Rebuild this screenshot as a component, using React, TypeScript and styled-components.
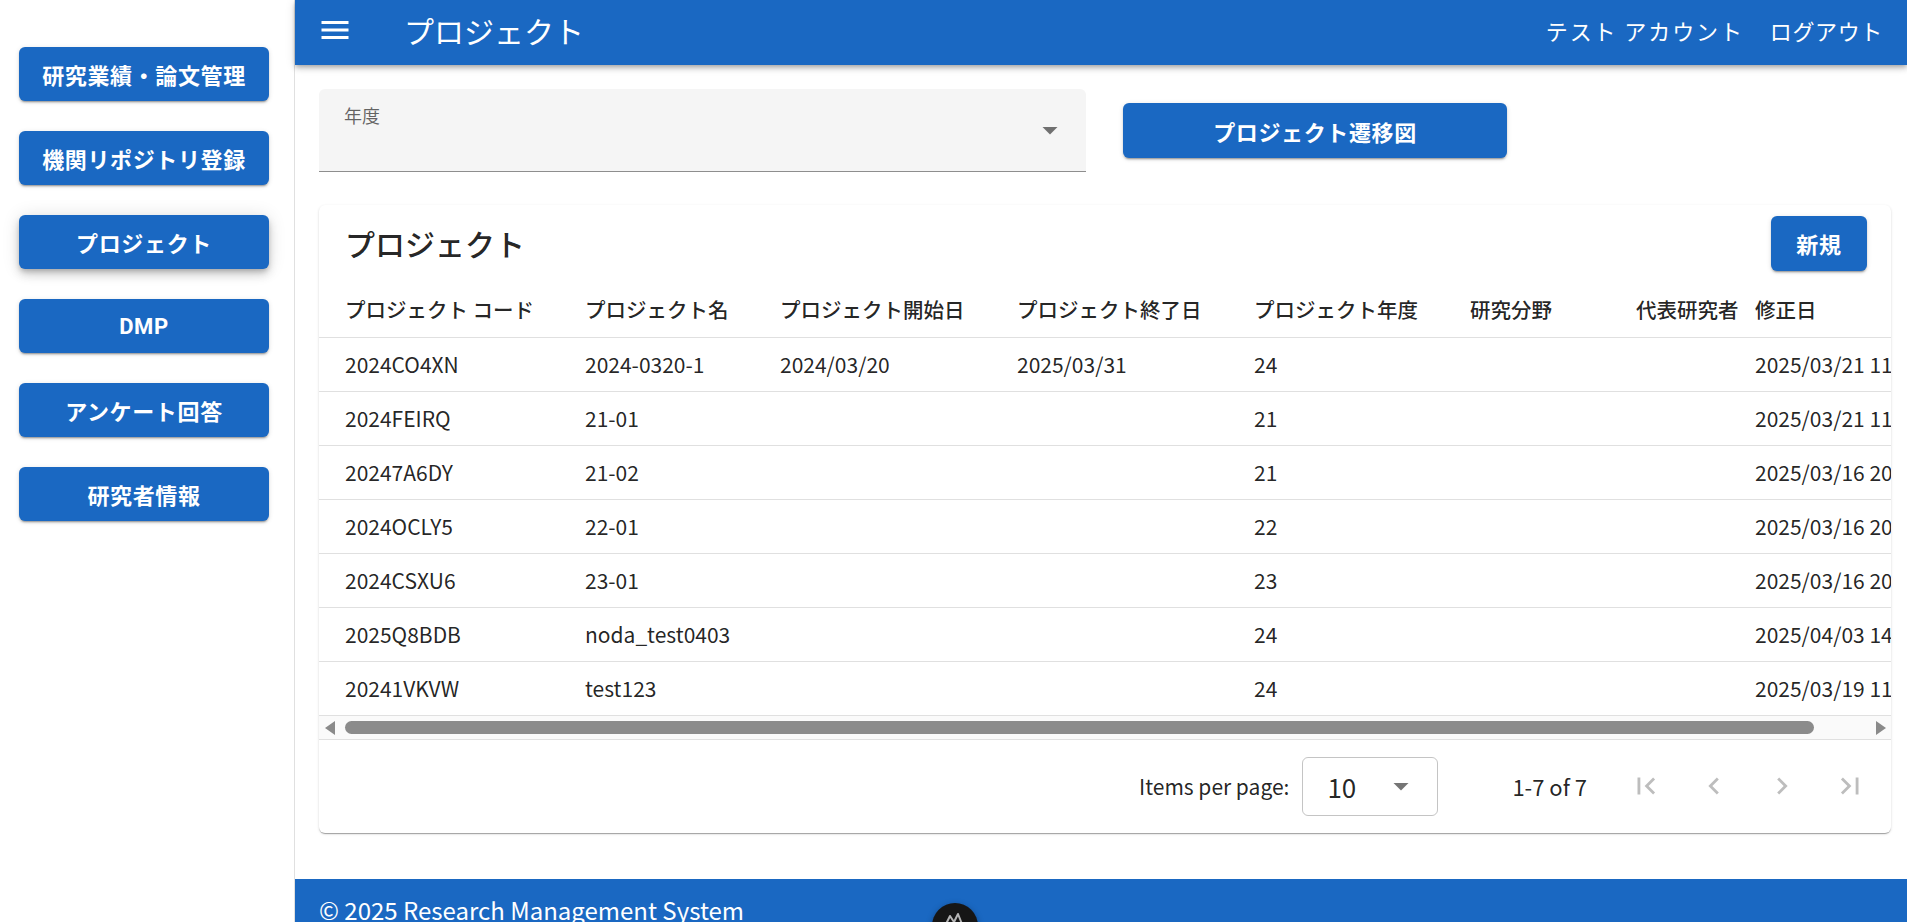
import React from "react";
import styled, { createGlobalStyle } from "styled-components";

const BLUE = "#1a68c2";
const JP = `"Noto Sans CJK JP", "Noto Sans", sans-serif`;
const UI = `Roboto, "Noto Sans CJK JP", sans-serif`;

const GlobalStyle = createGlobalStyle`
  html { scrollbar-width: none; }
  html::-webkit-scrollbar { display: none; }
  body {
    margin: 0;
    background: #fff;
    font-family: ${JP};
    color: rgba(0, 0, 0, 0.87);
  }
  * { box-sizing: border-box; }
`;

const Layout = styled.div`
  display: flex;
  min-height: 100vh;
`;

const Sidebar = styled.nav`
  width: 295px;
  flex-shrink: 0;
  border-right: 1px solid #e0e0e0;
  padding: 47px 25px 0 19px;
  display: flex;
  flex-direction: column;
  gap: 30px;
`;

const NavButton = styled.button<{ $active?: boolean }>`
  height: 54px;
  width: 100%;
  border: none;
  border-radius: 6px;
  background: ${BLUE};
  color: #fff;
  font-family: ${UI};
  font-size: 22px;
  font-weight: 700;
  letter-spacing: 0.63px;
  cursor: pointer;
  box-shadow: ${(p) =>
    p.$active
      ? "0px 3px 5px -1px rgba(0,0,0,0.2), 0px 6px 10px 0px rgba(0,0,0,0.14), 0px 1px 18px 0px rgba(0,0,0,0.12)"
      : "0px 3px 1px -2px rgba(0,0,0,0.2), 0px 2px 2px 0px rgba(0,0,0,0.14), 0px 1px 5px 0px rgba(0,0,0,0.12)"};
`;

const Main = styled.div`
  flex: 1;
  min-width: 0;
  display: flex;
  flex-direction: column;
`;

const AppBar = styled.header`
  height: 65px;
  background: ${BLUE};
  color: #fff;
  display: flex;
  align-items: center;
  padding: 0 24px 6px 22px;
  position: relative;
  z-index: 1;
  box-shadow: 0px 2px 4px -1px rgba(0, 0, 0, 0.2), 0px 4px 5px 0px rgba(0, 0, 0, 0.14),
    0px 1px 10px 0px rgba(0, 0, 0, 0.12);
`;

const MenuButton = styled.button`
  background: none;
  border: none;
  padding: 0;
  color: #fff;
  display: flex;
  cursor: pointer;
`;

const AppTitle = styled.h1`
  margin: 0 0 0 51px;
  font-family: ${JP};
  font-size: 30px;
  font-weight: 400;
  flex: 1;
`;

const AppActions = styled.div`
  display: flex;
  gap: 26px;
`;

const AppAction = styled.button<{ $spacing?: number }>`
  background: none;
  border: none;
  padding: 0;
  color: #fff;
  font-family: ${JP};
  font-size: 22px;
  font-weight: 400;
  letter-spacing: ${(p) => p.$spacing ?? 0.63}px;
  cursor: pointer;
`;

const Content = styled.main`
  padding: 24px 16px 46px 24px;
  display: flex;
  flex-direction: column;
  gap: 33px;
`;

const FilterRow = styled.div`
  display: flex;
  align-items: center;
  gap: 37px;
`;

const SelectField = styled.div`
  width: 767px;
  height: 83px;
  background: #f5f5f5;
  border-bottom: 1px solid rgba(0, 0, 0, 0.42);
  border-radius: 6px 6px 0 0;
  display: flex;
  align-items: center;
  justify-content: space-between;
  padding: 0 18px 0 25px;
`;

const FieldLabel = styled.span`
  align-self: flex-start;
  margin-top: 13px;
  font-size: 18px;
  color: rgba(0, 0, 0, 0.6);
`;

const DropIcon = styled.span`
  display: flex;
  color: rgba(0, 0, 0, 0.54);
`;

const PrimaryButton = styled.button<{ $width: number }>`
  width: ${(p) => p.$width}px;
  height: 55px;
  border: none;
  border-radius: 6px;
  background: ${BLUE};
  color: #fff;
  font-family: ${UI};
  font-size: 22px;
  font-weight: 700;
  letter-spacing: 0.63px;
  cursor: pointer;
  flex-shrink: 0;
  box-shadow: 0px 3px 1px -2px rgba(0, 0, 0, 0.2), 0px 2px 2px 0px rgba(0, 0, 0, 0.14),
    0px 1px 5px 0px rgba(0, 0, 0, 0.12);
`;

const Card = styled.section`
  background: #fff;
  border-radius: 6px;
  overflow: hidden;
  box-shadow: 0px 2px 1px -1px rgba(0, 0, 0, 0.2), 0px 1px 1px 0px rgba(0, 0, 0, 0.14),
    0px 1px 3px 0px rgba(0, 0, 0, 0.12);
`;

const CardHeader = styled.div`
  height: 76px;
  display: flex;
  align-items: center;
  justify-content: space-between;
  padding: 0 24px 0 26px;
`;

const CardTitle = styled.h2`
  margin: 0;
  font-size: 30px;
  font-weight: 500;
  color: rgba(0, 0, 0, 0.87);
`;

const TableViewport = styled.div`
  overflow: hidden;
`;

const Table = styled.table`
  border-collapse: collapse;
  table-layout: fixed;
  width: 1653px;
`;

const HeadCell = styled.th`
  height: 56px;
  padding: 0 0 0 26px;
  text-align: left;
  font-size: 20.5px;
  font-weight: 500;
  white-space: nowrap;
  color: rgba(0, 0, 0, 0.87);
  border-bottom: 1px solid #e0e0e0;
`;

const Cell = styled.td`
  height: 54px;
  padding: 0 0 0 26px;
  font-size: 21px;
  font-weight: 400;
  white-space: nowrap;
  overflow: hidden;
  color: rgba(0, 0, 0, 0.87);
  border-bottom: 1px solid #e0e0e0;
`;

const ScrollBar = styled.div`
  height: 23px;
  background: #fafafa;
  display: flex;
  align-items: center;
  gap: 10px;
  padding: 1px 5px 0 6px;
`;

const ScrollArrow = styled.span<{ $dir: "left" | "right" }>`
  width: 0;
  height: 0;
  border-top: 7px solid transparent;
  border-bottom: 7px solid transparent;
  ${(p) =>
    p.$dir === "left"
      ? "border-right: 10px solid #8a8a8a;"
      : "border-left: 10px solid #8a8a8a;"}
`;

const ScrollTrack = styled.div`
  flex: 1;
  height: 13px;
  display: flex;
  padding-right: 52px;
`;

const ScrollThumb = styled.div`
  flex: 1;
  background: #8b8b8b;
  border-radius: 7px;
`;

const Paginator = styled.div`
  height: 94px;
  border-top: 1px solid #e0e0e0;
  display: flex;
  align-items: center;
  justify-content: flex-end;
  padding-right: 7px;
  font-size: 21px;
  color: rgba(0, 0, 0, 0.87);
`;

const PageLabel = styled.span`
  margin-right: 13px;
`;

const PageSelect = styled.div`
  width: 136px;
  height: 59px;
  border: 1px solid rgba(0, 0, 0, 0.23);
  border-radius: 6px;
  display: flex;
  align-items: center;
  justify-content: space-between;
  padding: 0 18px 0 24px;
  font-size: 26px;
`;

const RangeLabel = styled.span`
  margin-left: 74px;
  margin-right: 25px;
  font-size: 22px;
`;

const IconBtn = styled.button`
  width: 68px;
  height: 68px;
  background: none;
  border: none;
  padding: 0;
  display: flex;
  align-items: center;
  justify-content: center;
  color: rgba(0, 0, 0, 0.26);
`;

const Footer = styled.footer`
  background: ${BLUE};
  color: #fff;
  padding: 13px 24px 30px;
  font-size: 24px;
  font-family: ${JP};
`;

const FloatingBadge = styled.div`
  position: fixed;
  left: 932px;
  top: 903px;
  width: 46px;
  height: 46px;
  border-radius: 50%;
  background: #161616;
  display: flex;
  justify-content: center;
  padding-top: 9px;
  box-shadow: 0 2px 6px rgba(0, 0, 0, 0.35);
`;

const Icon = ({ d, size = 24 }: { d: string; size?: number }) => (
  <svg width={size} height={size} viewBox="0 0 24 24" fill="currentColor">
    <path d={d} />
  </svg>
);

const MENU = "M3 18h18v-2H3zm0-5h18v-2H3zm0-7v2h18V6z";
const DROP = "M7 10l5 5 5-5z";
const FIRST = "M18.41 16.59L13.82 12l4.59-4.59L17 6l-6 6 6 6zM6 6h2v12H6z";
const PREV = "M15.41 16.59L10.83 12l4.58-4.59L14 6l-6 6 6 6 1.41-1.41z";
const NEXT = "M8.59 16.59L13.17 12 8.59 7.41 10 6l6 6-6 6-1.41-1.41z";
const LAST = "M5.59 7.41L10.18 12l-4.59 4.59L7 18l6-6-6-6zM16 6h2v12h-2z";

const navItems = ["研究業績・論文管理", "機関リポジトリ登録", "プロジェクト", "DMP", "アンケート回答", "研究者情報"];

const columns = [
  { label: "プロジェクト コード", width: 240 },
  { label: "プロジェクト名", width: 195 },
  { label: "プロジェクト開始日", width: 237 },
  { label: "プロジェクト終了日", width: 237 },
  { label: "プロジェクト年度", width: 216 },
  { label: "研究分野", width: 166 },
  { label: "代表研究者", width: 119 },
  { label: "修正日", width: 243 },
];

const rows = [
  ["2024CO4XN", "2024-0320-1", "2024/03/20", "2025/03/31", "24", "", "", "2025/03/21 11:42:10"],
  ["2024FEIRQ", "21-01", "", "", "21", "", "", "2025/03/21 11:40:55"],
  ["20247A6DY", "21-02", "", "", "21", "", "", "2025/03/16 20:15:31"],
  ["2024OCLY5", "22-01", "", "", "22", "", "", "2025/03/16 20:14:02"],
  ["2024CSXU6", "23-01", "", "", "23", "", "", "2025/03/16 20:12:47"],
  ["2025Q8BDB", "noda_test0403", "", "", "24", "", "", "2025/04/03 14:05:19"],
  ["20241VKVW", "test123", "", "", "24", "", "", "2025/03/19 11:30:08"],
];

export default function App() {
  return (
    <>
      <GlobalStyle />
      <Layout>
        <Sidebar>
          {navItems.map((item) => (
            <NavButton key={item} $active={item === "プロジェクト"}>
              {item}
            </NavButton>
          ))}
        </Sidebar>
        <Main>
          <AppBar>
            <MenuButton aria-label="menu">
              <Icon d={MENU} size={36} />
            </MenuButton>
            <AppTitle>プロジェクト</AppTitle>
            <AppActions>
              <AppAction $spacing={1.9}>テスト アカウント</AppAction>
              <AppAction>ログアウト</AppAction>
            </AppActions>
          </AppBar>
          <Content>
            <FilterRow>
              <SelectField>
                <FieldLabel>年度</FieldLabel>
                <DropIcon>
                  <Icon d={DROP} size={36} />
                </DropIcon>
              </SelectField>
              <PrimaryButton $width={384}>プロジェクト遷移図</PrimaryButton>
            </FilterRow>
            <Card>
              <CardHeader>
                <CardTitle>プロジェクト</CardTitle>
                <PrimaryButton $width={96}>新規</PrimaryButton>
              </CardHeader>
              <TableViewport>
                <Table>
                  <colgroup>
                    {columns.map((c) => (
                      <col key={c.label} style={{ width: c.width }} />
                    ))}
                  </colgroup>
                  <thead>
                    <tr>
                      {columns.map((c) => (
                        <HeadCell key={c.label}>{c.label}</HeadCell>
                      ))}
                    </tr>
                  </thead>
                  <tbody>
                    {rows.map((r) => (
                      <tr key={r[0]}>
                        {r.map((v, i) => (
                          <Cell key={i}>{v}</Cell>
                        ))}
                      </tr>
                    ))}
                  </tbody>
                </Table>
              </TableViewport>
              <ScrollBar>
                <ScrollArrow $dir="left" />
                <ScrollTrack>
                  <ScrollThumb />
                </ScrollTrack>
                <ScrollArrow $dir="right" />
              </ScrollBar>
              <Paginator>
                <PageLabel>Items per page:</PageLabel>
                <PageSelect>
                  <span>10</span>
                  <DropIcon>
                    <Icon d={DROP} size={36} />
                  </DropIcon>
                </PageSelect>
                <RangeLabel>1-7 of 7</RangeLabel>
                <IconBtn aria-label="first page">
                  <Icon d={FIRST} size={34} />
                </IconBtn>
                <IconBtn aria-label="previous page">
                  <Icon d={PREV} size={34} />
                </IconBtn>
                <IconBtn aria-label="next page">
                  <Icon d={NEXT} size={34} />
                </IconBtn>
                <IconBtn aria-label="last page">
                  <Icon d={LAST} size={34} />
                </IconBtn>
              </Paginator>
            </Card>
          </Content>
          <Footer>© 2025 Research Management System</Footer>
        </Main>
      </Layout>
      <FloatingBadge>
        <svg width="22" height="14" viewBox="0 0 22 14" fill="none" stroke="#b5b5b5" strokeWidth="2" strokeLinejoin="round">
          <path d="M2 12 L6 4 L10 10 L14 2 L18 12" />
        </svg>
      </FloatingBadge>
    </>
  );
}
